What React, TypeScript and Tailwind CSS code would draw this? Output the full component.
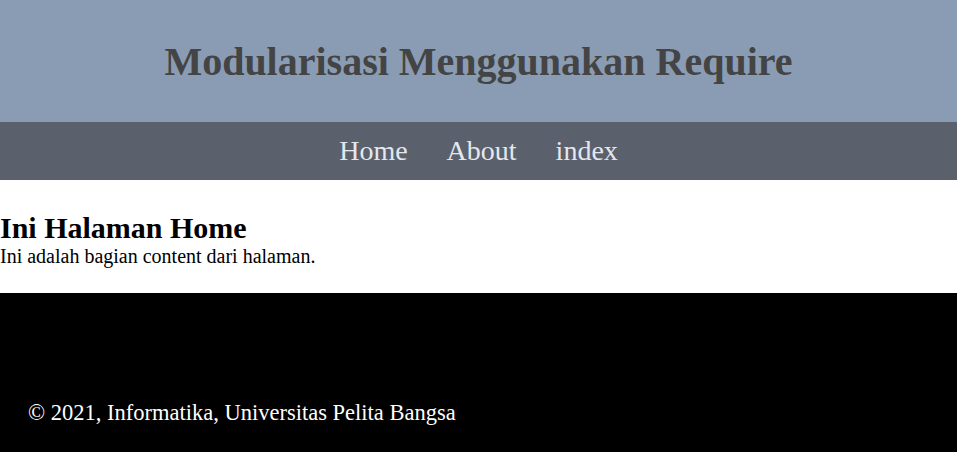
const menu = ["Home", "About", "index"];

export default function App() {
  return (
    <div className="w-full font-['Liberation_Serif','Times_New_Roman',serif] text-[20px] leading-[1.15] text-black">
      {/* header */}
      <header className="flex h-[122px] items-center justify-center bg-[#8a9cb4] pt-[2px]">
        <h1 className="text-[40px] font-bold text-[#444444]">
          Modularisasi Menggunakan Require
        </h1>
      </header>

      {/* nav */}
      <nav className="flex h-[58px] items-center justify-center gap-[39px] bg-[#5a606c] pt-[1px]">
        {menu.map((m) => (
          <a key={m} href="#" className="text-[28px] text-[#e4e8ee]">
            {m}
          </a>
        ))}
      </nav>

      {/* content */}
      <main className="bg-white pt-[30px] pb-[26px]">
        <h2 className="text-[30px] font-bold leading-[35px]">Ini Halaman Home</h2>
        <p className="leading-[22px]">Ini adalah bagian content dari halaman.</p>
      </main>

      {/* footer */}
      <footer className="h-[159px] bg-black pt-[107px] pl-[28px] text-[22.5px] text-white">
        © 2021, Informatika, Universitas Pelita Bangsa
      </footer>
    </div>
  );
}
